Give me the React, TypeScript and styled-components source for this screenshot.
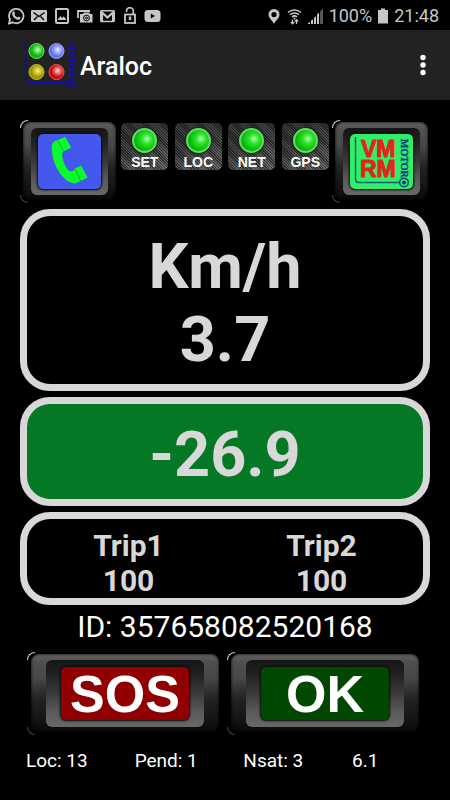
import React from "react";
import styled, { createGlobalStyle, css } from "styled-components";

const GlobalStyle = createGlobalStyle`
  * { box-sizing: border-box; }
  body { margin: 0; background: #000; font-family: Roboto, sans-serif; }
  button { font: inherit; border: 0; padding: 0; cursor: pointer; }
`;

const Screen = styled.div`
  min-height: 100vh;
  background: #000;
  color: #fff;
`;

const StatusBar = styled.div`
  display: flex;
  justify-content: space-between;
  align-items: center;
  height: 30px;
  padding: 2px 11px 0 7px;
  color: #c6c6c6;
`;

const Notifications = styled.div`
  display: flex;
  align-items: center;
  gap: 6px;
`;

const SystemInfo = styled.div`
  display: flex;
  align-items: center;
  gap: 5px;
  font-size: 18px;
  line-height: 24px;
`;

const Glyph = styled.svg`
  display: block;
  flex: none;
`;

const AppBar = styled.header`
  display: flex;
  align-items: center;
  height: 70px;
  padding: 0 15px 0 24px;
  background: #222;
`;

const Title = styled.h1`
  flex: 1;
  margin: 4px 0 0 4px;
  font-size: 25px;
  line-height: 30px;
  font-weight: 500;
`;

const MenuButton = styled.button`
  display: flex;
  justify-content: center;
  width: 24px;
  background: none;
  color: #fff;
`;

const Content = styled.main`
  display: flex;
  flex-direction: column;
  gap: 6px;
  padding: 20px 20px 0;
`;

const TopRow = styled.div`
  display: flex;
`;

const Indicators = styled.div`
  flex: 1;
  display: flex;
  justify-content: space-around;
  padding-top: 3px;
`;

const Indicator = styled.button`
  display: flex;
  flex-direction: column;
  align-items: center;
  gap: 2px;
  width: 47px;
  height: 47px;
  padding-top: 5px;
  border-radius: 5px;
  background:
    repeating-linear-gradient(45deg, #0008 0 1px, #0000 1px 2px),
    linear-gradient(160deg, #3c3c3c, #484848 45%, #747474);
  color: #fff;
  font: bold 14px/14px "Liberation Sans", sans-serif;
`;

const Lamp = styled.span`
  width: 25px;
  height: 25px;
  flex: none;
  border: 2px solid #66d866;
  border-radius: 50%;
  background: radial-gradient(circle at 62% 42%, #a4ffa4, #2be02b 30%, #06b806 65%, #04a404);
  box-shadow: 0 0 2px 1px #0a300a;
`;

const Key = styled.button<{ $wide?: boolean }>`
  position: relative;
  display: flex;
  width: 98px;
  height: 83px;
  padding: 2px 3px 3px;
  background: none;
  ${(p) =>
    p.$wide &&
    css`
      flex: 1;
      width: auto;
      padding: 2px 4px 3px;
    `}

  &::before,
  &::after {
    content: "";
    position: absolute;
    top: 0;
    left: 0;
    width: 7px;
    height: 7px;
    border-top: 1px solid #ccc;
    border-left: 1px solid #ccc;
    border-radius: 8px 0 0 0;
  }
  &::after {
    top: auto;
    bottom: 0;
    border-color: #444;
    border-top: 0;
    border-bottom: 1px solid #444;
    border-radius: 0 0 0 8px;
  }
`;

const Bezel = styled.span<{ $wide?: boolean }>`
  flex: 1;
  display: flex;
  padding: ${(p) => (p.$wide ? "6px 15px 5px" : "6px 8px 5px")};
  border-radius: 8px;
  background: linear-gradient(#626262, #505050 10%, #484848 30%, #222 58%, #151515 82%, #080808);
  box-shadow: inset 0 0 3px #000;
`;

const Recess = styled.span<{ $wide?: boolean }>`
  flex: 1;
  display: flex;
  padding: ${(p) => (p.$wide ? "7px 15px" : "6px 7px")};
  border-radius: 6px;
  background: linear-gradient(#151515, #202020 20%, #3a3a3a 50%, #5a5a5a 78%, #686868);
`;

const Display = styled.span<{ $color: string }>`
  flex: 1;
  display: flex;
  align-items: center;
  justify-content: center;
  border-radius: 5px;
  background: ${(p) => p.$color};
  box-shadow: 0 0 2px 1px #0a0a0a;
  color: #fff;
  font: bold 52px/54px "Liberation Sans", sans-serif;
`;

const Panel = styled.section<{ $fill?: string }>`
  border: 7px solid #d8d8d8;
  border-radius: 30px;
  background: ${(p) => p.$fill ?? "#000"};
  color: #d8d8d8;
  font-weight: 700;
  text-align: center;
`;

const ReadingPanel = styled(Panel)`
  padding: 14px 0 8px;
`;

const Reading = styled.div`
  font-size: 63px;
  line-height: 73px;
`;

const TripPanel = styled(Panel)`
  display: grid;
  grid-template-columns: 1fr 1fr;
  padding: 9px 5px 0;
`;

const Trip = styled.div`
  font-size: 30px;
  line-height: 35px;
`;

const DeviceId = styled.div`
  margin-top: -2px;
  font-size: 30px;
  line-height: 35px;
  text-align: center;
`;

const Actions = styled.div`
  display: flex;
  gap: 4px;
  padding: 2px 7px 0;
`;

const Footer = styled.footer`
  display: grid;
  grid-template-columns: 1fr 1fr 1fr 98px;
  padding: 14px 0 0 26px;
  font-size: 19px;
  line-height: 24px;
`;

function StatusIcons() {
  return (
    <Notifications>
      <Glyph width="18" height="18" viewBox="0 0 18 18" fill="none" stroke="currentColor">
        <path d="M2 16.5l1-4A7.2 7.2 0 1 1 5.8 15.3z" strokeWidth="1.8" />
        <path d="M6.2 4.6c.6-.5 1-.3 1.3.3l.6 1.4c.1.4-.7 1-.6 1.3.6 1.3 1.6 2.2 2.9 2.8.4.1.9-1 1.3-.8l1.6.8c.5.3.2 1.3-.4 1.8-1.2 1-3 .5-4.9-.8C6.2 10 4.8 7.8 5.2 6.2c.1-.7.5-1.2 1-1.6z" fill="currentColor" stroke="none" />
      </Glyph>
      <Glyph width="16" height="14" viewBox="0 0 16 14">
        <rect y="1" width="16" height="12" rx="1" fill="currentColor" />
        <path d="M2.5 3.5L8 7.5l5.5-4M3 11l3.5-3.5M13 11L9.5 7.5" fill="none" stroke="#000" strokeWidth="1.4" />
      </Glyph>
      <Glyph width="18" height="16" viewBox="0 0 18 16">
        <rect x="3" y="1" width="12" height="14" rx="1" fill="none" stroke="currentColor" strokeWidth="2" />
        <path d="M4.5 12l2.8-4 1.9 2 1.6-1.7 2.7 3.7z" fill="currentColor" />
      </Glyph>
      <Glyph width="16" height="16" viewBox="0 0 16 16">
        <path d="M1 10V3h12" fill="none" stroke="currentColor" strokeWidth="1.8" />
        <path d="M3 6h3l1-1.5h5L13 6h2.5v8.5H3z" fill="currentColor" />
        <circle cx="9.5" cy="10" r="2.9" fill="none" stroke="#000" />
        <circle cx="9.5" cy="10" r="1" fill="none" stroke="#000" />
      </Glyph>
      <Glyph width="17" height="14" viewBox="0 0 17 14" fill="none">
        <rect x="1.7" y="1.7" width="13.6" height="10.8" rx="1" stroke="currentColor" strokeWidth="1.4" />
        <path d="M3 12.5V3.5L8.500 8.5 14 3.5V12.5" stroke="currentColor" strokeWidth="2.2" />
      </Glyph>
      <Glyph width="16" height="18" viewBox="0 0 16 18">
        <path d="M4.5 5V4a3.4 3.4 0 0 1 6.8 0v4" fill="none" stroke="currentColor" strokeWidth="1.6" />
        <rect x="3" y="7.5" width="10" height="8.5" fill="none" stroke="currentColor" strokeWidth="1.8" />
        <path d="M8 9.5v3.5" stroke="currentColor" strokeWidth="2.4" />
      </Glyph>
      <Glyph width="17" height="14" viewBox="0 0 17 14">
        <rect x="0.5" y="1" width="16" height="12" rx="3.5" fill="currentColor" />
        <path d="M6.8 4.6v4.8L11 7z" fill="#000" />
      </Glyph>
    </Notifications>
  );
}

function SystemIcons() {
  return (
    <SystemInfo>
      <Glyph width="16" height="17" viewBox="0 0 16 17">
        <path fillRule="evenodd" d="M8 1a5.5 5.5 0 0 0-5.5 5.5C2.5 10 6 12 8 16c2-4 5.5-6 5.5-9.5A5.5 5.5 0 0 0 8 1zm0 3a2.6 2.6 0 1 1 0 5.2A2.6 2.6 0 0 1 8 4z" fill="currentColor" />
      </Glyph>
      <Glyph width="15" height="17" viewBox="0 0 15 17" fill="none" stroke="currentColor">
        <path d="M1 4.5a9.5 9.5 0 0 1 13 0M3 6.8a6.6 6.6 0 0 1 9 0M5 9a3.7 3.7 0 0 1 5 0" strokeWidth="1.5" />
        <circle cx="7.5" cy="10.5" r="1" fill="currentColor" stroke="none" />
        <path d="M5.5 11.5v4M3.8 14l1.7 1.8L7.2 14M9.5 16v-4M7.8 13.5l1.7-1.8 1.7 1.8" strokeWidth="1.2" />
      </Glyph>
      <Glyph width="17" height="17" viewBox="0 0 17 17" fill="currentColor">
        <path d="M1 16v-1l2-1v2zM4 16v-3.5l2-1V16zM7 16v-6l2-2v8zM10 16V6.5l2-2V16z" />
        <path d="M13 16V3.5l3-3V16z" fill="#555" />
      </Glyph>
      <span>100%</span>
      <Glyph width="12" height="16" viewBox="0 0 12 16" fill="currentColor">
        <path d="M1 2h3V0.5h4V2h3v13.5H1z" />
      </Glyph>
      <time>21:48</time>
    </SystemInfo>
  );
}

const balls = [
  { id: "green", x: 12.5, y: 11, light: "#b8ffb8", dark: "#05b805", rim: "#76d976" },
  { id: "blue", x: 32.5, y: 11, light: "#e4e8ff", dark: "#6674ee", rim: "#9aa4f4" },
  { id: "yellow", x: 12.5, y: 32, light: "#fff46a", dark: "#a09400", rim: "#c2b840" },
  { id: "red", x: 32.5, y: 32, light: "#ffd0d0", dark: "#cc0808", rim: "#e46060" },
];

function AppLogo() {
  return (
    <Glyph width="52" height="50" viewBox="0 0 52 50">
      <defs>
        {balls.map((b) => (
          <radialGradient key={b.id} id={b.id} cx="0.58" cy="0.42" r="0.55">
            <stop offset="0" stopColor={b.light} />
            <stop offset="0.75" stopColor={b.dark} />
          </radialGradient>
        ))}
      </defs>
      <path d="M1.5 1v38q0 3.5 3.5 3.5h39" fill="none" stroke="#0a0ac0" strokeWidth="1.4" />
      {balls.map((b) => (
        <circle key={b.id} cx={b.x} cy={b.y} r="7.5" fill={`url(#${b.id})`} stroke={b.rim} />
      ))}
      <circle cx="47.5" cy="43" r="4" fill="none" stroke="#0a0ac8" strokeWidth="1.3" />
      <circle cx="47.5" cy="43" r="1.5" fill="#0a0ac8" />
      <text transform="translate(44.5 2) rotate(90)" fontFamily="Liberation Serif, serif" fontWeight="700" fontSize="9" fill="#0c0cd8">
        MOTOR
      </text>
    </Glyph>
  );
}

function Handset() {
  return (
    <Glyph width="63" height="55" viewBox="1 6 189 162">
      <path d="M60 23Q42 26 42 45C42 90 70 140 102 151Q112 155 120 150L150 135L130 99L111 109Q109 119 99 117C84 110 76 86 73 68Q73 60 78 57L101 45L82 13Z" fill="#0bfb2c" />
      <path d="M61 26L78 56M112 109L129 145" stroke="#147a3a" strokeWidth="2" />
    </Glyph>
  );
}

function MotorLogo() {
  return (
    <Glyph width="63" height="56" viewBox="0 0 63 56">
      <path d="M5.5 3v42q0 3.5 3.5 3.5h40" fill="none" stroke="#155a78" strokeWidth="1.4" />
      <text fontFamily="Liberation Sans, sans-serif" fontWeight="700" fontSize="23" fill="#e0261c" stroke="#e0261c" strokeWidth="1" strokeLinejoin="round">
        <tspan x="11" y="23">VM</tspan>
        <tspan x="10" y="43">RM</tspan>
      </text>
      <text transform="translate(51 5) rotate(90)" fontFamily="Liberation Serif, serif" fontWeight="700" fontSize="10" fill="#123c86" stroke="#123c86" strokeWidth="0.3">
        MOTOR
      </text>
      <circle cx="54" cy="48.5" r="4.3" fill="none" stroke="#123c86" strokeWidth="1.4" />
      <circle cx="54" cy="48.5" r="2" fill="#123c86" />
    </Glyph>
  );
}

type PanelKeyProps = {
  color: string;
  wide?: boolean;
  label?: string;
  children: React.ReactNode;
};

function PanelKey({ color, wide, label, children }: PanelKeyProps) {
  return (
    <Key type="button" $wide={wide} aria-label={label}>
      <Bezel $wide={wide}>
        <Recess $wide={wide}>
          <Display $color={color}>{children}</Display>
        </Recess>
      </Bezel>
    </Key>
  );
}

export default function App() {
  return (
    <Screen>
      <GlobalStyle />
      <StatusBar>
        <StatusIcons />
        <SystemIcons />
      </StatusBar>
      <AppBar>
        <AppLogo />
        <Title>Araloc</Title>
        <MenuButton type="button" aria-label="More options">
          <Glyph width="6" height="22" viewBox="0 0 6 22" fill="currentColor">
            <circle cx="3" cy="3.5" r="2.7" />
            <circle cx="3" cy="11" r="2.7" />
            <circle cx="3" cy="18.5" r="2.7" />
          </Glyph>
        </MenuButton>
      </AppBar>
      <Content>
        <TopRow>
          <PanelKey color="#4458ee" label="Call">
            <Handset />
          </PanelKey>
          <Indicators>
            {["SET", "LOC", "NET", "GPS"].map((name) => (
              <Indicator type="button" key={name}>
                <Lamp />
                {name}
              </Indicator>
            ))}
          </Indicators>
          <PanelKey color="#30ee68">
            <MotorLogo />
          </PanelKey>
        </TopRow>
        <ReadingPanel>
          <Reading>Km/h</Reading>
          <Reading>3.7</Reading>
        </ReadingPanel>
        <ReadingPanel $fill="#047824">
          <Reading>-26.9</Reading>
        </ReadingPanel>
        <TripPanel>
          <Trip>
            Trip1
            <br />
            100
          </Trip>
          <Trip>
            Trip2
            <br />
            100
          </Trip>
        </TripPanel>
        <DeviceId>ID: 357658082520168</DeviceId>
        <Actions>
          <PanelKey wide color="#900000">
            SOS
          </PanelKey>
          <PanelKey wide color="#004800">
            OK
          </PanelKey>
        </Actions>
      </Content>
      <Footer>
        <span>Loc: 13</span>
        <span>Pend: 1</span>
        <span>Nsat: 3</span>
        <span>6.1</span>
      </Footer>
    </Screen>
  );
}
